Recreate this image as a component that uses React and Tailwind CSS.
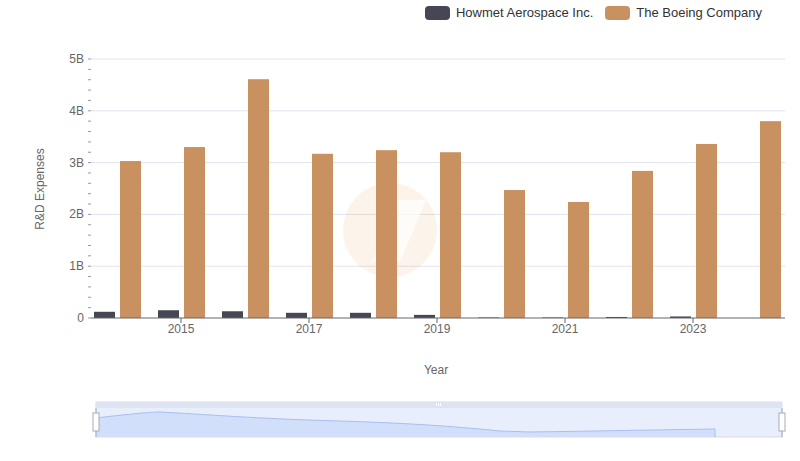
import React from 'react';

const boeing = [3.03, 3.3, 4.61, 3.17, 3.24, 3.2, 2.47, 2.24, 2.84, 3.36, 3.8];
const howmet = [0.12, 0.15, 0.13, 0.1, 0.1, 0.06, 0.01, 0.01, 0.02, 0.03, 0];
const y0 = 318;
const per = 51.8;
const cx = (i) => 117 + i * 64;

const Legend = () => (
  <div className="h-[26px] flex items-center justify-end gap-3 pr-[38px] text-[13px] text-[#333]" style={{ fontFamily: '"Liberation Sans", Arial, sans-serif' }}>
    <div className="flex items-center gap-[6px]">
      <span className="w-[25px] h-[14px] rounded-[4px] bg-[#464655]" />
      <span>Howmet Aerospace Inc.</span>
    </div>
    <div className="flex items-center gap-[6px]">
      <span className="w-[25px] h-[14px] rounded-[4px] bg-[#c8915f]" />
      <span>The Boeing Company</span>
    </div>
  </div>
);

const Chart = () => (
  <svg width="800" height="435" viewBox="0 26 800 435" className="block" style={{ fontFamily: '"Liberation Sans", Arial, sans-serif' }}>
    {/* toolbox icons */}
    <g stroke="#666" fill="none" strokeWidth="1">
      <path d="M748 7v4M746 9h4M752 9h9v12h-12v-8" />
      <path d="M780 7l-4 4 4 4M776 11h13v11h-12v-7" />
    </g>
    {[1, 2, 3, 4, 5].map((v) => (
      <line key={v} x1="91" x2="785" y1={y0 - v * per} y2={y0 - v * per} stroke="#e0e4ef" />
    ))}
    {Array.from({ length: 26 }).map((_, i) => (
      <line key={i} x1="88" x2="91" y1={y0 - i * per / 5} y2={y0 - i * per / 5} stroke="#999" />
    ))}
    {['0', '1B', '2B', '3B', '4B', '5B'].map((t, i) => (
      <text key={t} x="84" y={y0 - i * per + 4} textAnchor="end" fontSize="12" fill="#666">{t}</text>
    ))}
    <text transform="translate(44 189) rotate(-90)" textAnchor="middle" fontSize="12" fill="#666">R&amp;D Expenses</text>
    {/* watermark */}
    <g opacity="0.12" fill="#e8a25a">
      <circle cx="390" cy="230" r="47" />
    </g>
    <path d="M372 262 L398 200 L426 200 L400 262 Z" fill="#fff" opacity="0.7" />
    {boeing.map((v, i) => (
      <g key={i}>
        <rect x={cx(i) - 23} y={y0 - howmet[i] * per} width="21" height={howmet[i] * per} fill="#464655" />
        <rect x={cx(i) + 3} y={y0 - v * per} width="21" height={v * per} fill="#c8915f" />
      </g>
    ))}
    <line x1="91" x2="785" y1={y0} y2={y0} stroke="#666" />
    {[2015, 2017, 2019, 2021, 2023].map((yr, k) => (
      <g key={yr}>
        <line x1={181 + k * 128} x2={181 + k * 128} y1={y0} y2={y0 + 5} stroke="#666" />
        <text x={181 + k * 128} y={y0 + 15} textAnchor="middle" fontSize="12" fill="#666">{yr}</text>
      </g>
    ))}
    <text x="436" y="374" textAnchor="middle" fontSize="12" fill="#666">Year</text>
    {/* data zoom slider */}
    <rect x="96" y="402" width="686" height="35" fill="#e8eefb" stroke="#d4dbee" />
    <rect x="96" y="402" width="686" height="6" fill="#dde3f1" />
    <path d="M96 418 C130 414,150 412,160 412 C200 414,260 419,340 421 C400 423,440 425,500 431 L530 432 C600 431,650 430,715 429 L715 437 L96 437 Z" fill="#d2dffa" />
    <path d="M96 418 C130 414,150 412,160 412 C200 414,260 419,340 421 C400 423,440 425,500 431 L530 432 C600 431,650 430,715 429 L715 437" fill="none" stroke="#a8bff0" />
    <g stroke="#aab" fill="#fff">
      <line x1="96" x2="96" y1="408" y2="437" />
      <line x1="782" x2="782" y1="408" y2="437" />
      <rect x="93" y="413" width="6" height="18" />
      <rect x="779" y="413" width="6" height="18" />
    </g>
    <g fill="#fff"><rect x="436" y="403" width="1" height="3" /><rect x="438" y="403" width="1" height="3" /><rect x="440" y="403" width="1" height="3" /></g>
  </svg>
);

export default function App() {
  return (
    <div className="w-[800px] h-[461px] bg-white overflow-hidden">
      <Legend />
      <Chart />
    </div>
  );
}
